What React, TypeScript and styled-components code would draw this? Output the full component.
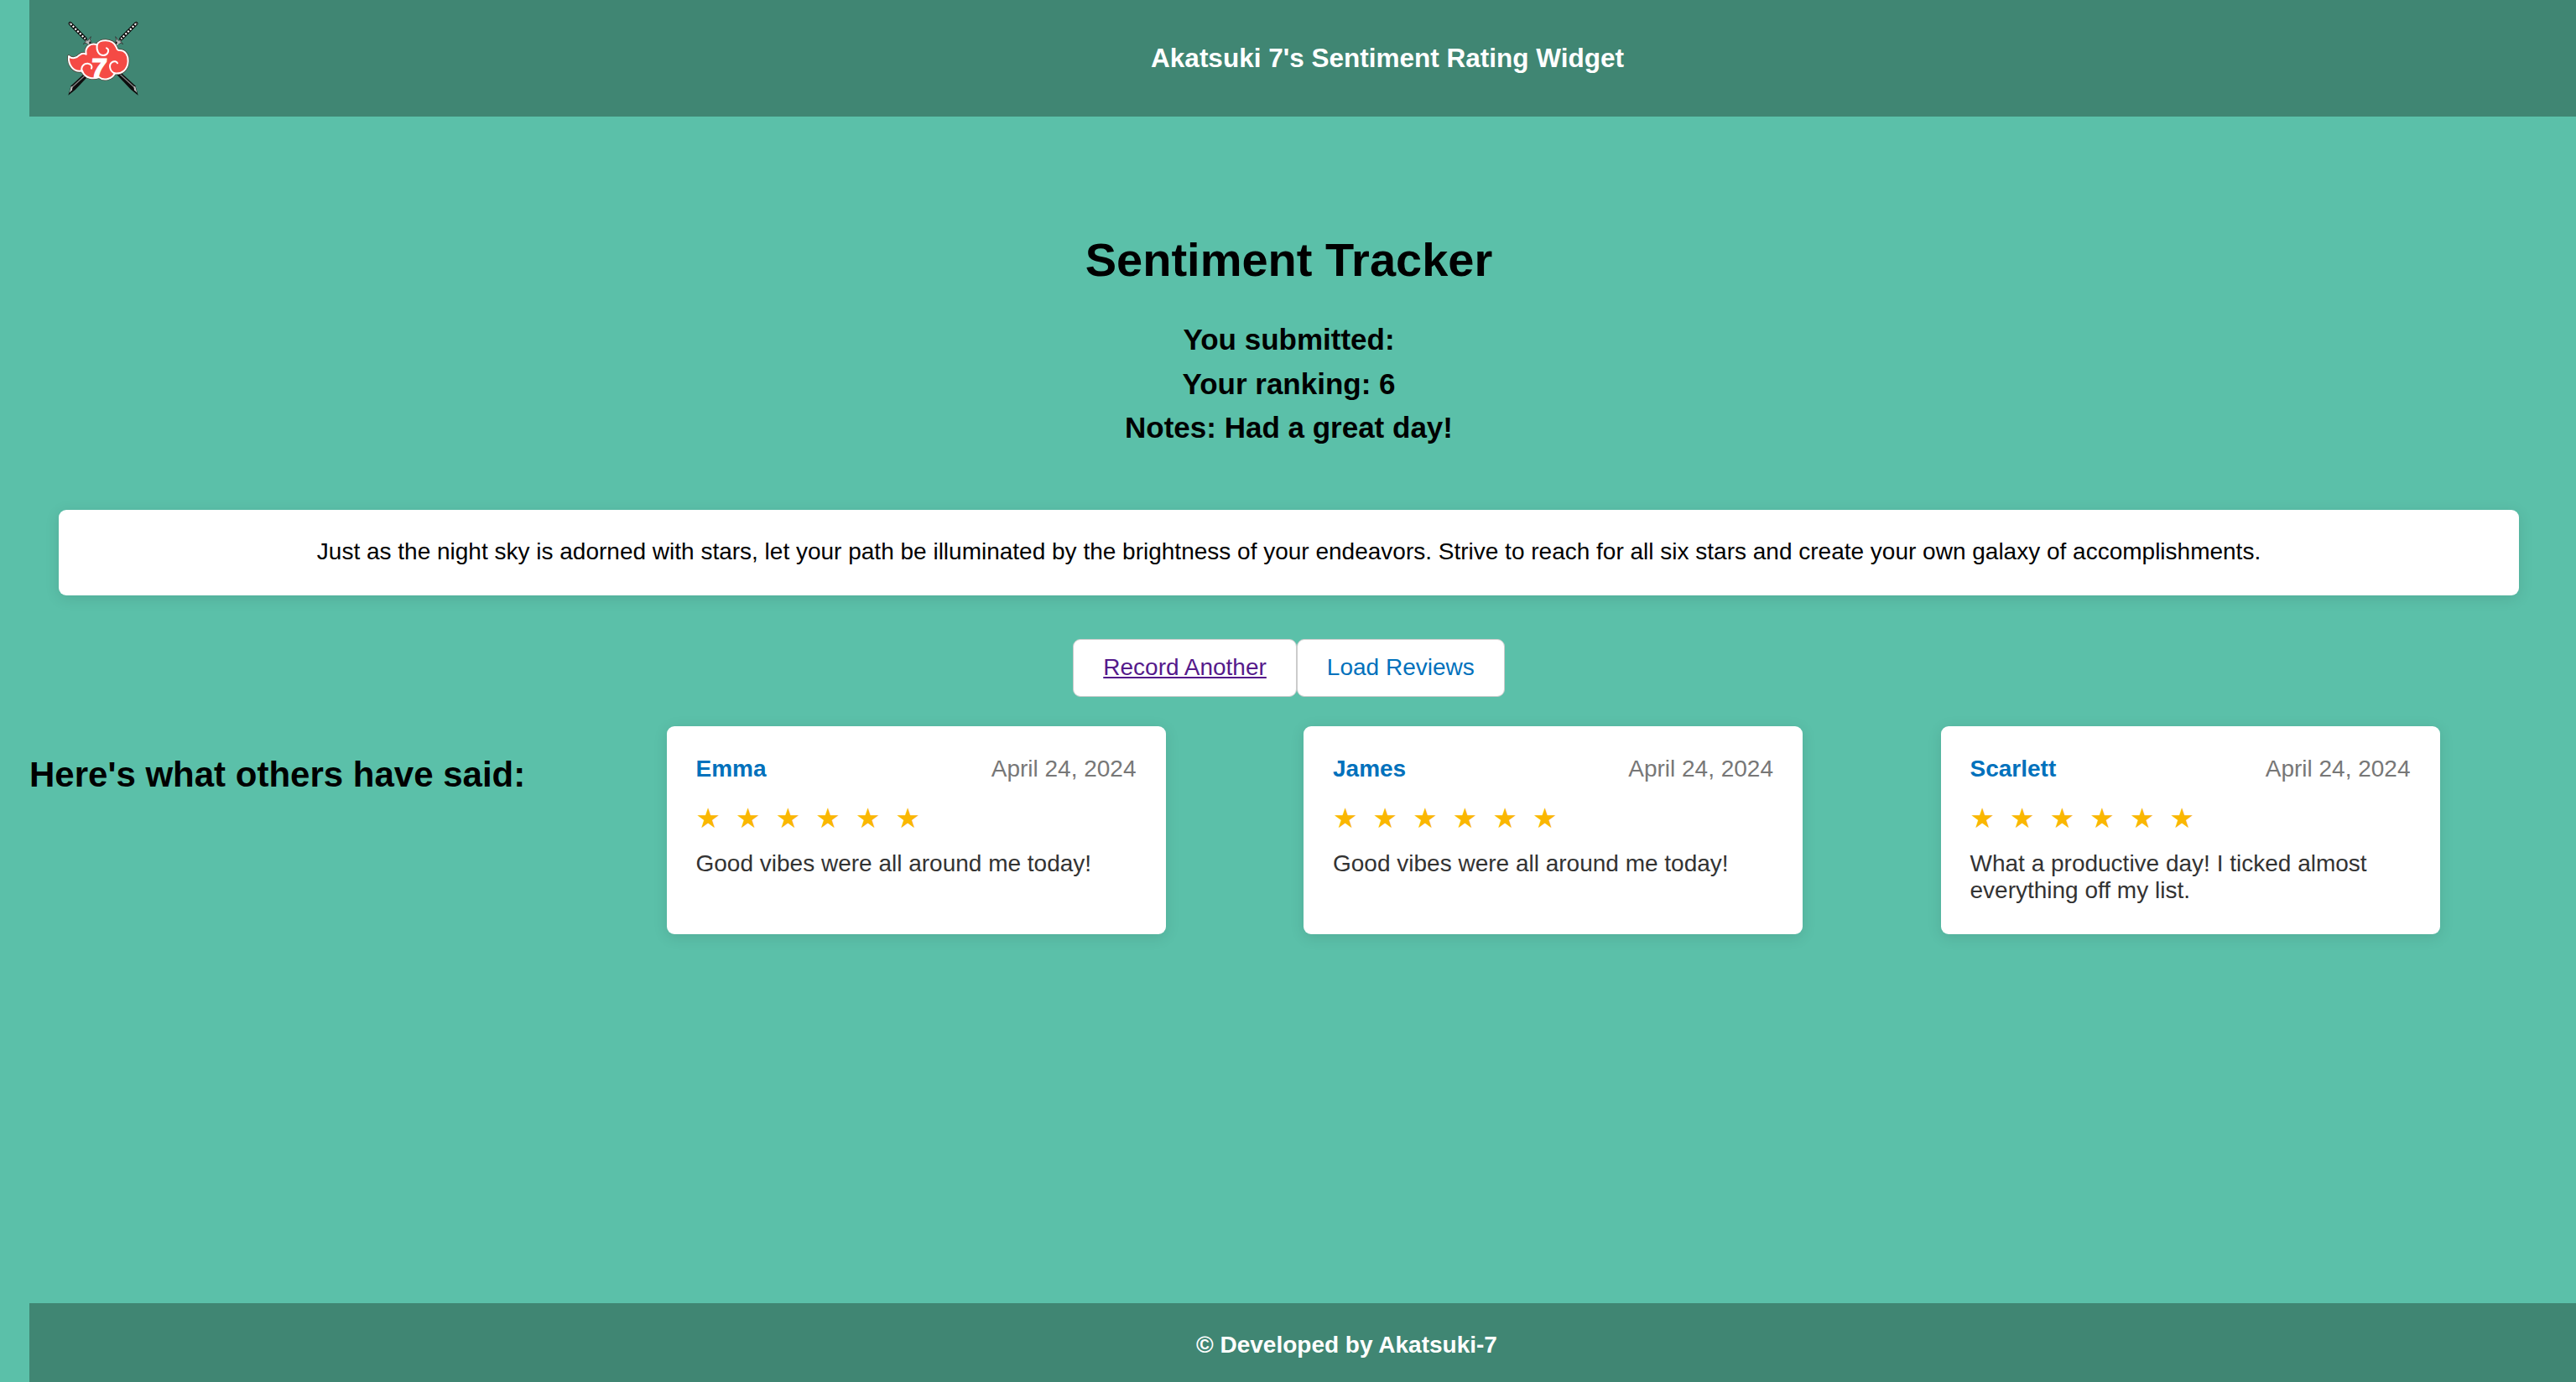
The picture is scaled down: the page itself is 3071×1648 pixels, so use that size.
import React from "react";
import styled, { createGlobalStyle } from "styled-components";

const GlobalStyle = createGlobalStyle`
  *, *::before, *::after { box-sizing: border-box; }
  body {
    margin: 0;
    background: #5bc0a9;
    font-family: "Liberation Sans", Arial, sans-serif;
    font-size: 28px;
    line-height: 32px;
    color: #000;
  }
  h1, h2, h3, p { margin: 0; }
`;

const Page = styled.div`
  display: flex;
  flex-direction: column;
  height: 1648px;
  padding-left: 35px;
`;

const Header = styled.header`
  display: flex;
  align-items: center;
  flex: none;
  height: 139px;
  background: #408673;
`;

const LogoBox = styled.div`
  display: flex;
  flex: none;
  width: 202px;
  padding-left: 44px;
`;

const HeaderTitle = styled.h3`
  flex: 1;
  padding-bottom: 2px;
  text-align: center;
  font-size: 31.5px;
  line-height: 36px;
  color: #fff;
`;

const Main = styled.main`
  display: flex;
  flex-direction: column;
  flex: 1;
  padding: 139px 33px 0 0;
`;

const Title = styled.h1`
  text-align: center;
  font-size: 56px;
  line-height: 64px;
`;

const Summary = styled.div`
  padding: 37px 0 71px;
  text-align: center;
  font-size: 35px;
  font-weight: bold;
  line-height: 52.6px;
`;

const Quote = styled.p`
  margin: 0 35px;
  padding: 34px 35px 36px;
  text-align: center;
  background: #fff;
  border-radius: 9px;
  box-shadow: 0 3.5px 17.5px rgba(0, 0, 0, 0.1);
`;

const Actions = styled.div`
  display: flex;
  justify-content: center;
  margin: 52px 0 35px;
`;

const Action = styled.a<{ $visited?: boolean }>`
  padding: 17.5px 35px;
  height: 69px;
  background: #fff;
  border: 1px solid #ccc;
  border-radius: 9px;
  color: ${(p) => (p.$visited ? "#551a8b" : "#0071bc")};
  text-decoration: ${(p) => (p.$visited ? "underline" : "none")};
`;

const Reviews = styled.section`
  display: grid;
  grid-template-columns: repeat(4, 1fr);
  column-gap: 35px;
`;

const ReviewsTitle = styled.h2`
  padding-top: 34px;
  font-size: 42px;
  line-height: 48px;
  white-space: nowrap;
`;

const Card = styled.article`
  display: flex;
  flex-direction: column;
  width: 595px;
  min-height: 248px;
  padding: 35px;
  background: #fff;
  border-radius: 9px;
  box-shadow: 0 3.5px 17.5px rgba(0, 0, 0, 0.1);
`;

const CardHead = styled.div`
  display: flex;
  justify-content: space-between;
  line-height: 31px;
`;

const Author = styled.span`
  font-weight: bold;
  color: #0071bc;
`;

const PostedOn = styled.span`
  color: #777;
`;

const Stars = styled.div`
  display: flex;
  height: 82px;
  padding-top: 7px;
  align-items: center;
  font-family: "DejaVu Sans", sans-serif;
  font-size: 33px;
  color: #fab700;
`;

const Star = styled.span`
  width: 47.6px;
`;

const Note = styled.p`
  color: #333;
`;

const Footer = styled.footer`
  flex: none;
  height: 94px;
  padding: 34px 0 0 105px;
  text-align: center;
  font-weight: bold;
  color: #fff;
  background: #408673;
`;

const Katana = () => (
  <g>
    <path d="M251 81 L305 136" stroke="#0b0b0b" strokeWidth="13" strokeLinecap="round" />
    <path d="M251 81 L305 136" stroke="#fff" strokeWidth="6.5" strokeDasharray="6.5 5.4" strokeDashoffset="-1" />
    <path d="M247 83 L252 77" stroke="#777" strokeWidth="3" />
    <path d="M298 155 L307 144 L302 139 L314 142 L325 128 L322 139 L326 145 L315 150 L310 154 L306 150 Z" fill="#aaa" stroke="#222" strokeWidth="2" />
    <path d="M312 146 L322 157" stroke="#bbb" strokeWidth="8" />
    <path d="M320 148 L332 161" stroke="#111" strokeWidth="6" />
    <path d="M412 258 L434 258 L484 304 L494 338 L468 317 Z" fill="#0d0d0d" />
    <path d="M430 263 L481 310" stroke="#858585" strokeWidth="4" />
    <path d="M478 305 L484 307 L490 329 L480 319 Z" fill="#b9b9b9" />
  </g>
);

const CLOUD =
  "M246 198 C258 210 275 204 284 194 C291 188 301 187 308 191 C303 166 322 149 347 157 C354 137 402 134 415 164 C420 176 420 176 426 177 C448 176 459 195 458 216 C457 246 435 263 410 259 C404 278 372 288 354 273 C335 281 303 278 294 250 C262 258 243 228 246 198 Z";

const Logo = () => (
  <svg width="88" height="92" viewBox="237 69 264 276" fill="none">
    <Katana />
    <g transform="translate(738 0) scale(-1 1)">
      <Katana />
    </g>
    <path d={CLOUD} stroke="#553a32" strokeWidth="10" strokeLinejoin="round" />
    <path d={CLOUD} fill="#f54a45" stroke="#fff" strokeWidth="6" strokeLinejoin="round" />
    <g stroke="#fff" strokeWidth="6" strokeLinecap="round">
      <path d="M347 158 C344 180 354 195 370 195 C388 194 392 174 381 169" />
      <path d="M294 254 C287 236 300 223 314 224 C328 226 330 235 327 242" />
      <path d="M411 260 C392 252 388 229 400 220 C408 214 418 217 420 223" />
    </g>
    <text
      transform="translate(323 271.5) skewX(-5) scale(1.22 1.16)"
      fontFamily="Liberation Sans, Arial, sans-serif"
      fontSize="82"
      fontWeight="bold"
      fill="#fff"
      stroke="#fff"
      strokeWidth="4"
    >
      7
    </text>
  </svg>
);

const reviews = [
  { author: "Emma", date: "April 24, 2024", stars: 6, note: "Good vibes were all around me today!" },
  { author: "James", date: "April 24, 2024", stars: 6, note: "Good vibes were all around me today!" },
  {
    author: "Scarlett",
    date: "April 24, 2024",
    stars: 6,
    note: "What a productive day! I ticked almost everything off my list.",
  },
];

export default function App() {
  return (
    <>
      <GlobalStyle />
      <Page>
        <Header>
          <LogoBox>
            <Logo />
          </LogoBox>
          <HeaderTitle>Akatsuki 7's Sentiment Rating Widget</HeaderTitle>
        </Header>
        <Main>
          <Title>Sentiment Tracker</Title>
          <Summary>
            <p>You submitted:</p>
            <p>Your ranking: 6</p>
            <p>Notes: Had a great day!</p>
          </Summary>
          <Quote>
            Just as the night sky is adorned with stars, let your path be illuminated by the brightness of your
            endeavors. Strive to reach for all six stars and create your own galaxy of accomplishments.
          </Quote>
          <Actions>
            <Action $visited>Record Another</Action>
            <Action>Load Reviews</Action>
          </Actions>
          <Reviews>
            <ReviewsTitle>Here's what others have said:</ReviewsTitle>
            {reviews.map((r) => (
              <Card key={r.author}>
                <CardHead>
                  <Author>{r.author}</Author>
                  <PostedOn>{r.date}</PostedOn>
                </CardHead>
                <Stars>
                  {Array.from({ length: r.stars }, (_, i) => (
                    <Star key={i}>★</Star>
                  ))}
                </Stars>
                <Note>{r.note}</Note>
              </Card>
            ))}
          </Reviews>
        </Main>
        <Footer>© Developed by Akatsuki-7</Footer>
      </Page>
    </>
  );
}
